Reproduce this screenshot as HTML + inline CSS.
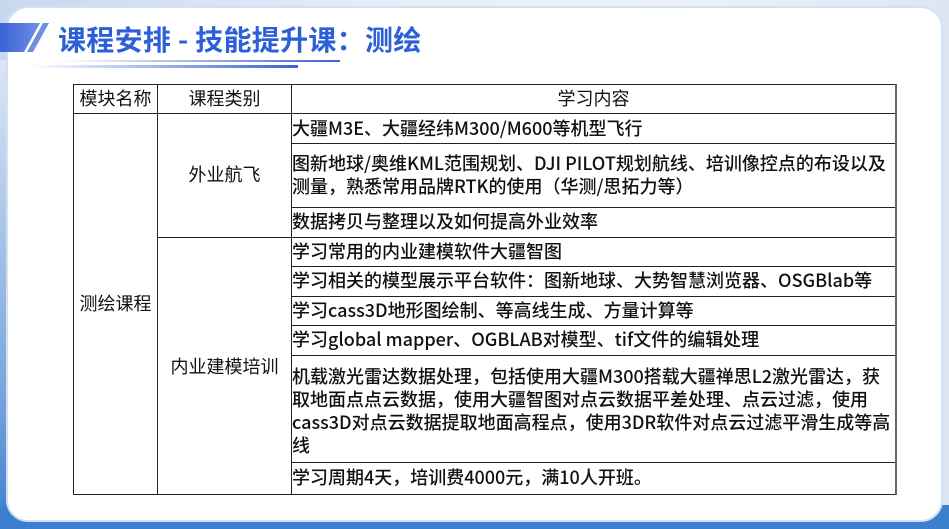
<!DOCTYPE html>
<html><head><meta charset="utf-8"><style>
*{margin:0;padding:0;box-sizing:border-box}
body{width:949px;height:529px;overflow:hidden;position:relative;font-family:"Noto Sans CJK SC",sans-serif;color:#111}
.bg{position:absolute;left:0;top:0;width:949px;height:529px;background:linear-gradient(90deg,#c8d8f1 0,#e6edf8 40%,#eef2f8 70%,#dde6f4 100%)}
.bot{position:absolute;left:0;top:505px;width:949px;height:24px;background:#3a80cf}
.lft{position:absolute;left:0;top:60px;width:30px;height:469px;background:linear-gradient(180deg,#dbe6f6,#7aa6dc 70%,#3a80cf)}
.card{position:absolute;left:6px;top:6px;width:937px;height:516px;background:#fff;border-radius:22px;border:2px solid #d3e0f4}
.title{position:absolute;left:58px;top:20px;font-size:28px;font-weight:bold;color:#2c5fd8;line-height:38px;letter-spacing:0.3px}
.l1{position:absolute;left:60px;top:60px;width:280px;height:2px;background:linear-gradient(90deg,rgba(60,100,220,0),#3a62d4)}
.l2{position:absolute;left:30px;top:65px;width:268px;height:3px;background:linear-gradient(90deg,rgba(60,100,220,0),#3a62d4)}
.h{position:absolute;background:#222;height:1px}
.v{position:absolute;background:#222;width:1px}
.t{position:absolute;font-size:18px;line-height:23px;white-space:nowrap;font-weight:500}
.c{position:absolute;font-size:18px;line-height:23px;text-align:center;white-space:nowrap}
</style></head><body>
<div class="bg"></div><div class="lft"></div><div class="bot"></div>
<div class="card"></div>
<svg style="position:absolute;left:0;top:20px" width="60" height="40"><defs><linearGradient id="g" x1="0" x2="1"><stop offset="0" stop-color="#3a62d4"/><stop offset="1" stop-color="#6f8fe6"/></linearGradient></defs><polygon points="0,3 40,3 24,32 0,32" fill="url(#g)"/><polygon points="43,3 49,3 33,32 27,32" fill="#6d8fe0"/></svg>
<div class="title">课程安排 - 技能提升课：测绘</div>
<div class="l1"></div><div class="l2"></div>

<div class="h" style="left:73px;top:84px;width:823px"></div>
<div class="h" style="left:73px;top:113px;width:823px"></div>
<div class="h" style="left:291px;top:143px;width:605px"></div>
<div class="h" style="left:291px;top:207px;width:605px"></div>
<div class="h" style="left:157px;top:237px;width:739px"></div>
<div class="h" style="left:291px;top:266px;width:605px"></div>
<div class="h" style="left:291px;top:296px;width:605px"></div>
<div class="h" style="left:291px;top:325px;width:605px"></div>
<div class="h" style="left:291px;top:355px;width:605px"></div>
<div class="h" style="left:291px;top:462px;width:605px"></div>
<div class="h" style="left:73px;top:494px;width:823px"></div>
<div class="v" style="left:73px;top:84px;height:411px"></div>
<div class="v" style="left:157px;top:84px;height:411px"></div>
<div class="v" style="left:291px;top:84px;height:411px"></div>
<div class="v" style="left:895px;top:84px;height:411px;width:2px;background:#666"></div>

<div class="c" style="left:74px;top:87px;width:83px">模块名称</div>
<div class="c" style="left:158px;top:87px;width:133px">课程类别</div>
<div class="c" style="left:292px;top:87px;width:603px">学习内容</div>
<div class="c" style="left:74px;top:292px;width:83px">测绘课程</div>
<div class="c" style="left:158px;top:163px;width:133px">外业航飞</div>
<div class="c" style="left:158px;top:355px;width:133px">内业建模培训</div>

<div class="t" style="left:292px;top:117px">大疆M3E、大疆经纬M300/M600等机型飞行</div>
<div class="t" style="left:292px;top:152px">图新地球/奥维KML范围规划、DJI PILOT规划航线、培训像控点的布设以及<br>测量，熟悉常用品牌RTK的使用（华测/思拓力等）</div>
<div class="t" style="left:292px;top:210px">数据拷贝与整理以及如何提高外业效率</div>
<div class="t" style="left:292px;top:240px">学习常用的内业建模软件大疆智图</div>
<div class="t" style="left:292px;top:269px">学习相关的模型展示平台软件：图新地球、大势智慧浏览器、OSGBlab等</div>
<div class="t" style="left:292px;top:299px">学习cass3D地形图绘制、等高线生成、方量计算等</div>
<div class="t" style="left:292px;top:328px">学习global mapper、OGBLAB对模型、tif文件的编辑处理</div>
<div class="t" style="left:292px;top:365px">机载激光雷达数据处理，包括使用大疆M300搭载大疆禅思L2激光雷达，获<br>取地面点点云数据，使用大疆智图对点云数据平差处理、点云过滤，使用<br>cass3D对点云数据提取地面高程点，使用3DR软件对点云过滤平滑生成等高<br>线</div>
<div class="t" style="left:292px;top:466px">学习周期4天，培训费4000元，满10人开班。</div>
</body></html>
